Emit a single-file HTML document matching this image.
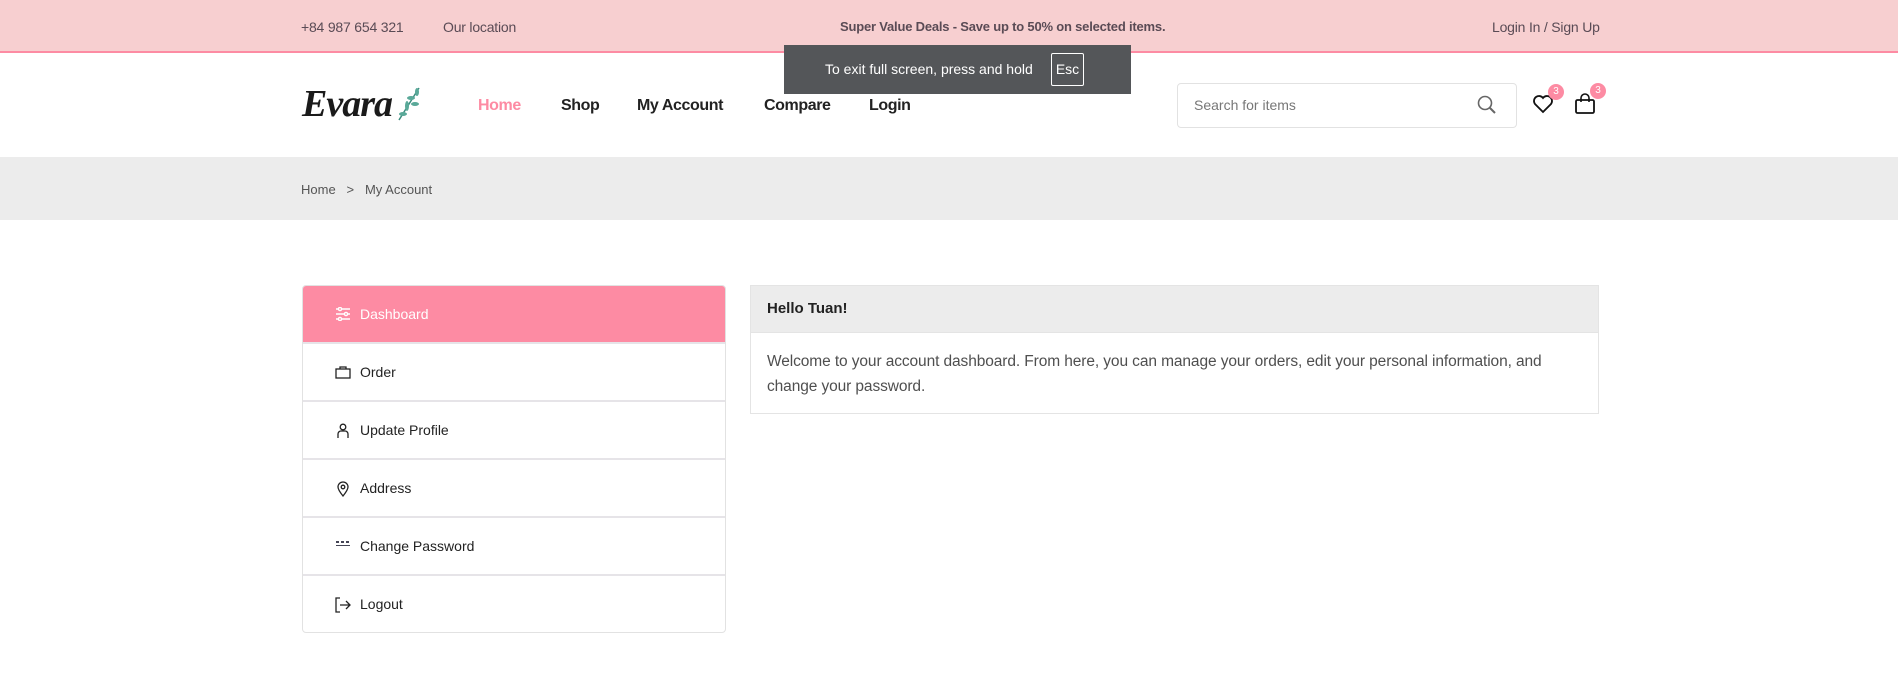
<!DOCTYPE html>
<html><head><style>
*{box-sizing:border-box;margin:0;padding:0}
body{width:1898px;height:695px;overflow:hidden;background:#fff;font-family:"Liberation Sans",sans-serif;color:#4f4f4f;position:relative}
.a{position:absolute;white-space:nowrap}
.top{position:absolute;left:0;top:0;width:1898px;height:53px;background:#f7cfd0;border-bottom:2px solid #fd8ba3}
.top span{position:absolute;top:19px;font-size:14px;color:#5a4b55;letter-spacing:-0.2px}
.nav{position:absolute;top:97px;font-size:16px;font-weight:bold;color:#222;letter-spacing:-0.4px}
.bc{position:absolute;left:0;top:157px;width:1898px;height:63px;background:#ececec}
.side{position:absolute;left:302px;top:285px;width:424px;height:348px;border:1px solid #e2e2e2;border-radius:4px;overflow:hidden}
.row{height:58px;border-bottom:2px solid #e6e4e8;position:relative;font-size:14px;color:#222}
.row span{position:absolute;left:57px;top:20px}
.row svg{position:absolute;left:32px;top:21px}
.panel{position:absolute;left:750px;top:285px;width:849px;height:129px;border:1px solid #e4e4e4}
.badge{position:absolute;width:16px;height:16px;border-radius:8px;background:#fd8ba3;color:#fff;font-size:10px;text-align:center;line-height:16px}
</style></head><body>
<div class="top">
<span style="left:301px">+84 987 654 321</span>
<span style="left:443px">Our location</span>
<span style="left:840px;font-weight:bold;font-size:13px">Super Value Deals - Save up to 50% on selected items.</span>
<span style="left:1492px">Login In / Sign Up</span>
</div>
<div class="a" style="left:302px;top:82px;font-family:'Liberation Serif',serif;font-style:italic;font-weight:bold;font-size:38px;color:#1a1a1a;letter-spacing:-1px">Evara</div>
<svg class="a" style="left:395px;top:84px" width="30" height="40" viewBox="0 0 30 40"><path d="M4 36 Q14 20 24 4" stroke="#3a8c7e" stroke-width="1.5" fill="none"/><g fill="#5aa999"><ellipse cx="22" cy="8" rx="2" ry="4"/><ellipse cx="16" cy="14" rx="4" ry="2"/><ellipse cx="12" cy="22" rx="2" ry="5"/><ellipse cx="20" cy="20" rx="4" ry="2"/><ellipse cx="8" cy="30" rx="4" ry="2"/></g></svg>
<div class="nav" style="left:478px;color:#fd8ba3">Home</div>
<div class="nav" style="left:561px">Shop</div>
<div class="nav" style="left:637px">My Account</div>
<div class="nav" style="left:764px">Compare</div>
<div class="nav" style="left:869px">Login</div>
<div class="a" style="left:1177px;top:83px;width:340px;height:45px;border:1px solid #e2e2e2;border-radius:4px"></div>
<div class="a" style="left:1194px;top:97px;font-size:14px;color:#777">Search for items</div>
<svg class="a" style="left:1477px;top:95px" width="20" height="20" viewBox="0 0 20 20"><circle cx="8" cy="8" r="6.5" stroke="#666" stroke-width="1.6" fill="none"/><path d="M13 13 L18 18" stroke="#666" stroke-width="2"/></svg>
<svg class="a" style="left:1532px;top:94px" width="22" height="20" viewBox="0 0 22 20"><path d="M11 18 L3 10 A4.5 4.5 0 0 1 11 4 A4.5 4.5 0 0 1 19 10 Z" stroke="#111" stroke-width="1.8" fill="none"/></svg>
<div class="badge" style="left:1548px;top:84px">3</div>
<svg class="a" style="left:1574px;top:93px" width="22" height="22" viewBox="0 0 22 22"><rect x="2" y="7" width="18" height="13" rx="1.5" stroke="#111" stroke-width="1.8" fill="none"/><path d="M7 9 V5 A4 4 0 0 1 15 5 V9" stroke="#111" stroke-width="1.6" fill="none"/></svg>
<div class="badge" style="left:1590px;top:83px">3</div>
<div class="a" style="left:784px;top:45px;width:347px;height:49px;background:#545659"></div>
<div class="a" style="left:825px;top:61px;font-size:14px;color:#fff">To exit full screen, press and hold</div>
<div class="a" style="left:1051px;top:53px;width:33px;height:33px;border:1px solid #fff;border-radius:2px;color:#fff;font-size:14px;text-align:center;line-height:31px">Esc</div>
<div class="bc"><span class="a" style="left:301px;top:25px;font-size:13px;color:#555">Home&nbsp;&nbsp;&nbsp;&gt;&nbsp;&nbsp;&nbsp;My Account</span></div>
<div class="side">
<div class="row" style="background:#fd8ba3;color:#fff"><svg width="16" height="14" viewBox="0 0 16 14"><g stroke="#fff" stroke-width="1.4" fill="none"><path d="M1 2H15M1 7H15M1 12H15"/><circle cx="5" cy="2" r="1.6" fill="#fd8ba3"/><circle cx="11" cy="7" r="1.6" fill="#fd8ba3"/><circle cx="5" cy="12" r="1.6" fill="#fd8ba3"/></g></svg><span>Dashboard</span></div>
<div class="row"><svg width="16" height="14" viewBox="0 0 16 14"><rect x="1" y="4" width="14" height="9" stroke="#222" stroke-width="1.3" fill="none"/><path d="M5 4V2H11V4" stroke="#222" stroke-width="1.3" fill="none"/></svg><span>Order</span></div>
<div class="row"><svg width="16" height="16" viewBox="0 0 16 16"><circle cx="8" cy="4" r="2.8" stroke="#222" stroke-width="1.3" fill="none"/><path d="M3 15V11A3 3 0 0 1 6 8H10A3 3 0 0 1 13 11V15" stroke="#222" stroke-width="1.3" fill="none"/></svg><span>Update Profile</span></div>
<div class="row"><svg width="16" height="16" viewBox="0 0 16 16"><path d="M8 15C4 10 3 8 3 6A5 5 0 0 1 13 6C13 8 12 10 8 15Z" stroke="#222" stroke-width="1.3" fill="none"/><circle cx="8" cy="6" r="1.8" stroke="#222" stroke-width="1.3" fill="none"/></svg><span>Address</span></div>
<div class="row"><svg width="16" height="10" viewBox="0 0 16 10"><g fill="#445"><rect x="1" y="2" width="3" height="2"/><rect x="6" y="2" width="3" height="2"/><rect x="11" y="2" width="3" height="2"/><rect x="1" y="6" width="14" height="1"/></g></svg><span>Change Password</span></div>
<div class="row" style="border:none"><svg width="16" height="16" viewBox="0 0 16 16"><path d="M5 1H1V15H5M5 8H15M11 4L15 8L11 12" stroke="#222" stroke-width="1.3" fill="none"/></svg><span>Logout</span></div>
</div>
<div class="panel">
<div style="height:47px;background:#ececec;border-bottom:1px solid #e4e4e4;padding:14px 16px;font-size:15px;font-weight:bold;color:#222">Hello Tuan!</div>
<div style="padding:16px 16px;font-size:15.5px;line-height:25px;color:#4f4f4f;letter-spacing:-0.1px">Welcome to your account dashboard. From here, you can manage your orders, edit your personal information, and<br>change your password.</div>
</div>
</body></html>
